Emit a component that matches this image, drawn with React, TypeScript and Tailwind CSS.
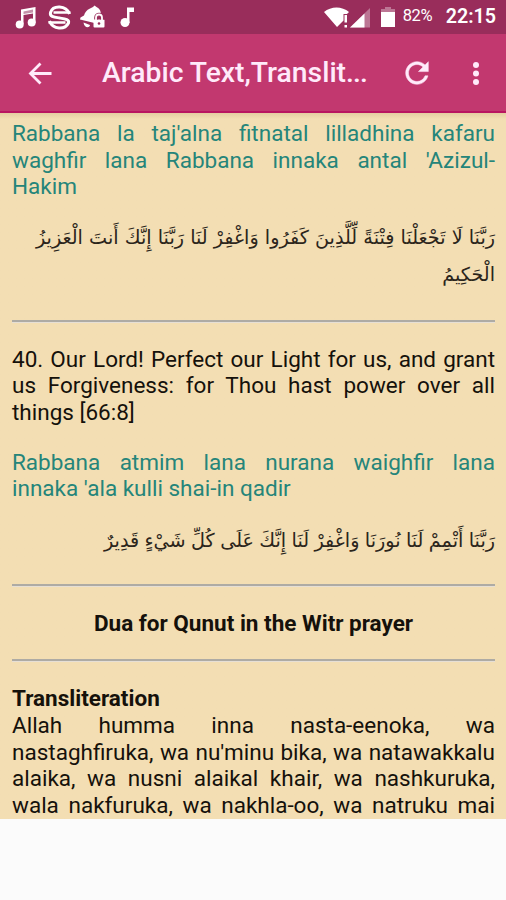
import type { ReactNode } from "react"

// Each entry is one line; all but the last are stretched to full width
function Verse({ lines, stretchLast = false, className = "" }: { lines: string[], stretchLast?: boolean, className?: string }) {
    return (
        <p className={`text-[22.5px] leading-[26.6px] ${className}`}>
            {lines.map((line, i) => (
                <span
                    key={i}
                    className={
                        i < lines.length - 1 || stretchLast
                            ? "block whitespace-nowrap text-justify [text-align-last:justify]"
                            : "block whitespace-nowrap"
                    }
                >
                    {line}
                </span>
            ))}
        </p>
    )
}

function Arabic({ lines, widths }: { lines: string[], widths: string[] }) {
    return (
        <div dir="rtl" lang="ar" className="font-['DejaVu_Sans',sans-serif] text-[19.2px] leading-[37px] text-[#2b251b]">
            {lines.map((line, i) => (
                <p key={i} className={`whitespace-nowrap [text-align-last:justify] [word-spacing:-2px] ${widths[i]}`}>{line}</p>
            ))}
        </div>
    )
}

function Rule({ className = "" }: { className?: string }) {
    return <hr className={`h-[3px] border-0 border-t-2 border-b border-t-[#aeaba4] border-b-[#e6dfd5] ${className}`} />
}

function Icon({ w, h, className = "", children }: { w: number, h: number, className?: string, children: ReactNode }) {
    return (
        <svg width={w} height={h} viewBox={`0 0 ${w} ${h}`} fill="white" className={`shrink-0 ${className}`}>
            {children}
        </svg>
    )
}

function StatusBar() {
    return (
        <div className="flex h-[34px] items-start bg-[#992d5b] pt-[5px] text-white">
            <Icon w={22} h={25} className="ml-[15px]">
                <path d="M6 4.500 20.500 2v16h-2.500V8.500L8.500 10v9H6z" />
                <path d="M8.500 6.500 18 4.500v3L8.500 9z" fill="#c391a8" />
                <circle cx="4.700" cy="19.500" r="4" />
                <circle cx="16.700" cy="17.500" r="4" />
            </Icon>
            <Icon w={26} h={25} className="ml-[10px]">
                <path d="M22.500 9C19 0 6 0 3.500 7.500c-1 4 3 4.500 9 5.500 6 1 10 1.500 9 5C18 25 6 25 2.500 16" fill="none" stroke="white" strokeWidth="3" />
                <path d="M6.500 7.500h17M1.500 17.500h17" stroke="white" strokeWidth="2.600" />
            </Icon>
            <Icon w={27} h={25} className="ml-[7px]">
                <path d="M10 3.500 13 2l1.500-1.500L16.500 2C20 3.500 21.500 7 20.500 10.500 17 11 15 13 14.500 18L0 14.500l.5-2L4 10.500C5 7.500 6.500 5 10 3.500z" />
                <path d="M3.500 17.500 10 20c-.5 3.500-6 3-6.500-2.500z" />
                <rect x="13.500" y="14.500" width="11" height="8" rx="1" />
                <path d="M16 14.500v-2c0-4 6-4 6 0v2" fill="none" stroke="#992d5b" strokeWidth="3.600" />
                <path d="M16 15v-2.500c0-4 6-4 6 0V15" fill="none" stroke="white" strokeWidth="1.800" />
                <circle cx="19" cy="18.500" r="1.300" fill="#992d5b" />
            </Icon>
            <Icon w={16} h={25} className="ml-[13px]">
                <path d="M7 2.500h7v4.500H9.500v11H7z" />
                <circle cx="5" cy="17.500" r="4.500" />
            </Icon>
            <div className="grow" />
            <Icon w={26} h={25}>
                <path d="M0 7C7 1 18 1 25 7l-2 2H19.500v6.500l-6.500 6.500z" />
                <path d="M20.500 10H23v7.500h-2.500zM20.500 20H23v2.500h-2.500z" />
            </Icon>
            <Icon w={21} h={25}>
                <path d="M20 3v19.500H0z" fillOpacity=".35" />
                <path d="M14.500 8.500v14H0z" />
            </Icon>
            <Icon w={14} h={25} className="ml-[10px]">
                <path d="M4 2h6v2h4v4H0V4h4z" fillOpacity=".35" />
                <path d="M0 7h14v15H0z" />
            </Icon>
            <span className="ml-[8px] w-[31px] whitespace-nowrap text-[16.5px] leading-[22px] tracking-[-0.3px]">82%</span>
            <span className="ml-[12px] mr-[10px] whitespace-nowrap text-[19.7px] leading-[23px] font-semibold">22:15</span>
        </div>
    )
}

function Toolbar() {
    return (
        <div className="flex h-[79px] items-center border-b-2 border-[#b91561] bg-[#c2386f] text-[#ffeafa]">
            <svg width="24" height="24" viewBox="0 0 24 24" className="ml-[28px] fill-none stroke-current stroke-[2.8]">
                <path d="M23.500 12.500H3M12.500 2.500 2.500 12.500l10 10" />
            </svg>
            <h1 className="ml-[50px] w-[266px] whitespace-nowrap text-[28.3px] leading-[36px] font-medium">
                Arabic Text,Translit<span className="tracking-[-0.9px]">...</span>
            </h1>
            <svg width="34" height="34" viewBox="0 0 24 24" className="ml-[32px] fill-current stroke-current stroke-[0.35]">
                <path d="M17.650 6.350C16.200 4.900 14.210 4 12 4c-4.420 0-7.990 3.580-7.990 8s3.570 8 7.990 8c3.730 0 6.840-2.550 7.730-6h-2.080c-.82 2.330-3.040 4-5.650 4-3.310 0-6-2.690-6-6s2.690-6 6-6c1.660 0 3.140.69 4.220 1.780L13 11h7V4l-2.350 2.350z" />
            </svg>
            <svg width="8" height="26" viewBox="0 0 8 26" className="ml-[38px] fill-current">
                <circle cx="4" cy="5" r="3" />
                <circle cx="4" cy="13.500" r="3" />
                <circle cx="4" cy="22" r="3" />
            </svg>
        </div>
    )
}

export default function App() {
    return (
        <div className="flex h-[900px] w-[506px] flex-col overflow-hidden bg-[#fbfbfb] font-[Roboto,sans-serif]">
            <StatusBar />
            <Toolbar />
            <main className="h-[706px] overflow-hidden bg-[#f3deb3] bg-linear-to-b from-[#e4cda1] to-[#f3deb3] to-[6px] pt-[7px] pr-[11px] pl-[12px] text-[#15110b]">
                <Verse
                    className="text-[#25857a]"
                    lines={[
                        "Rabbana la taj'alna fitnatal lilladhina kafaru",
                        "waghfir lana Rabbana innaka antal 'Azizul-",
                        "Hakim",
                    ]}
                />
                <div className="mt-[19px]">
                    <Arabic
                        lines={[
                            "رَبَّنَا لَا تَجْعَلْنَا فِتْنَةً لِّلَّذِينَ كَفَرُوا وَاغْفِرْ لَنَا رَبَّنَا إِنَّكَ أَنتَ الْعَزِيزُ",
                            "الْحَكِيمُ",
                        ]}
                        widths={["w-[459px]", "w-[54px]"]}
                    />
                </div>
                <Rule className="mt-[27px]" />
                <Verse
                    className="mt-[23px]"
                    lines={[
                        "40. Our Lord! Perfect our Light for us, and grant",
                        "us Forgiveness: for Thou hast power over all",
                        "things [66:8]",
                    ]}
                />
                <Verse
                    className="mt-[23px] text-[#25857a]"
                    lines={["Rabbana atmim lana nurana waighfir lana", "innaka 'ala kulli shai-in qadir"]}
                />
                <div className="mt-[20px]">
                    <Arabic
                        lines={["رَبَّنَا أَتْمِمْ لَنَا نُورَنَا وَاغْفِرْ لَنَا إِنَّكَ عَلَى كُلِّ شَيْءٍ قَدِيرٌ"]}
                        widths={["w-[391px]"]}
                    />
                </div>
                <Rule className="mt-[25px]" />
                <h2 className="mt-[23px] text-center text-[22.5px] leading-[26.6px] font-bold">Dua for Qunut in the Witr prayer</h2>
                <Rule className="mt-[22.5px]" />
                <h3 className="mt-[23.5px] text-[22.5px] leading-[26.6px] font-bold">Transliteration</h3>
                <Verse
                    stretchLast
                    lines={[
                        "Allah humma inna nasta-eenoka, wa",
                        "nastaghfiruka, wa nu'minu bika, wa natawakkalu",
                        "alaika, wa nusni alaikal khair, wa nashkuruka,",
                        "wala nakfuruka, wa nakhla-oo, wa natruku mai",
                    ]}
                />
            </main>
        </div>
    )
}
